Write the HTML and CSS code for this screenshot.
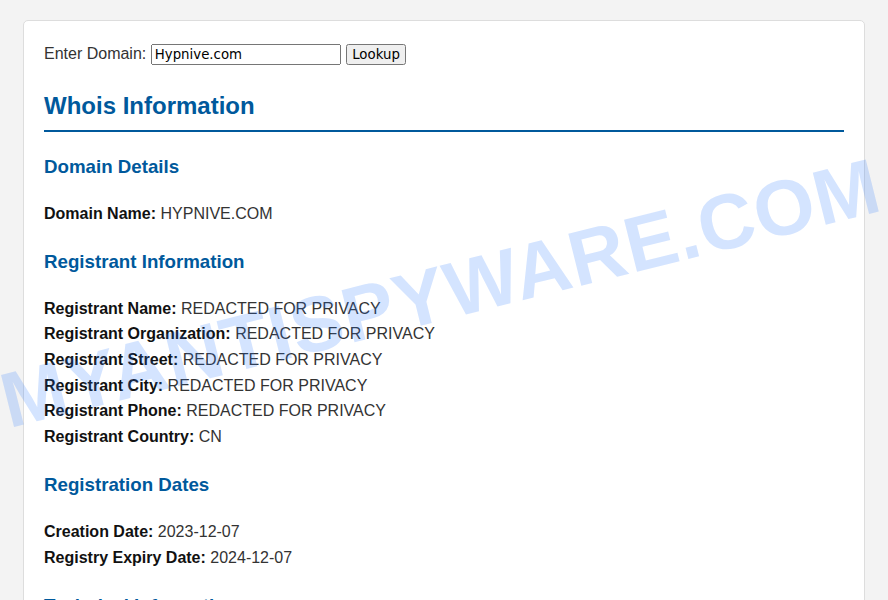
FILE: index.html
```html
<!DOCTYPE html>
<html>
  <head>
    <meta charset="utf-8">
    <title>Whois Lookup</title>
    <link rel="stylesheet" href="styles.css">
  </head>
  <body>
    <div class='container'>
      <form class='lookupForm' onsubmit='return false'>
        <label for='domain'>Enter Domain:</label>
        <input id='domain' name='domain' type='text' value='Hypnive.com'>
        <button type='submit'>Lookup</button>
      </form>

      <h2>Whois Information</h2>

      <div class='section'>
        <h3>Domain Details</h3>
        <p><strong>Domain Name:</strong> HYPNIVE.COM</p>
      </div>

      <div class='section'>
        <h3>Registrant Information</h3>
        <p><strong>Registrant Name:</strong> REDACTED FOR PRIVACY</p>
        <p><strong>Registrant Organization:</strong> REDACTED FOR PRIVACY</p>
        <p><strong>Registrant Street:</strong> REDACTED FOR PRIVACY</p>
        <p><strong>Registrant City:</strong> REDACTED FOR PRIVACY</p>
        <p><strong>Registrant Phone:</strong> REDACTED FOR PRIVACY</p>
        <p><strong>Registrant Country:</strong> CN</p>
      </div>

      <div class='section'>
        <h3>Registration Dates</h3>
        <p><strong>Creation Date:</strong> 2023-12-07</p>
        <p><strong>Registry Expiry Date:</strong> 2024-12-07</p>
      </div>

      <div class='section'>
        <h3>Technical Information</h3>
        <p><strong>Name Server:</strong> NS1.HYPNIVE.COM</p>
      </div>
    </div>
    <div class='watermark'>MYANTISPYWARE.COM</div>
  </body>
</html>
```

FILE: styles.css
```css
body{
  margin: 0;
  padding: 0;
  background-color: #f3f3f3;
  font-family: "Liberation Sans", Arial, sans-serif;
  font-size: 16px;
  line-height: 1.6;
  color: #333;
  overflow: hidden;
}
.container{
  max-width: 800px;
  margin: 20px auto;
  padding: 20px;
  background-color: #fff;
  border: 1px solid #ddd;
  border-radius: 5px;
}
.lookupForm{
  margin: 0;
}
.lookupForm input,
.lookupForm button{
  font-family: "DejaVu Sans", sans-serif;
  font-size: 13.33px;
}
.lookupForm input{
  width: 182px;
}
.lookupForm button{
  margin-left: 1px;
  padding: 1px 4px;
}
h2{
  margin: 20px 0 0;
  padding-bottom: 5px;
  font-size: 24px;
  color: #00599c;
  border-bottom: 2px solid #00599c;
}
h3{
  margin: 20px 0 18.72px;
  font-size: 18.72px;
  color: #00599c;
}
.section{
  margin-bottom: 21px;
}
p{
  margin: 0;
}
strong{
  color: #111;
}
.watermark{
  position: absolute;
  left: 12px;
  top: 362px;
  font-family: "Liberation Sans", Arial, sans-serif;
  font-weight: bold;
  font-size: 78px;
  line-height: 1;
  letter-spacing: 1px;
  color: rgba(40, 120, 255, 0.2);
  transform: rotate(-14deg);
  transform-origin: left bottom;
  pointer-events: none;
  white-space: nowrap;
}
```
